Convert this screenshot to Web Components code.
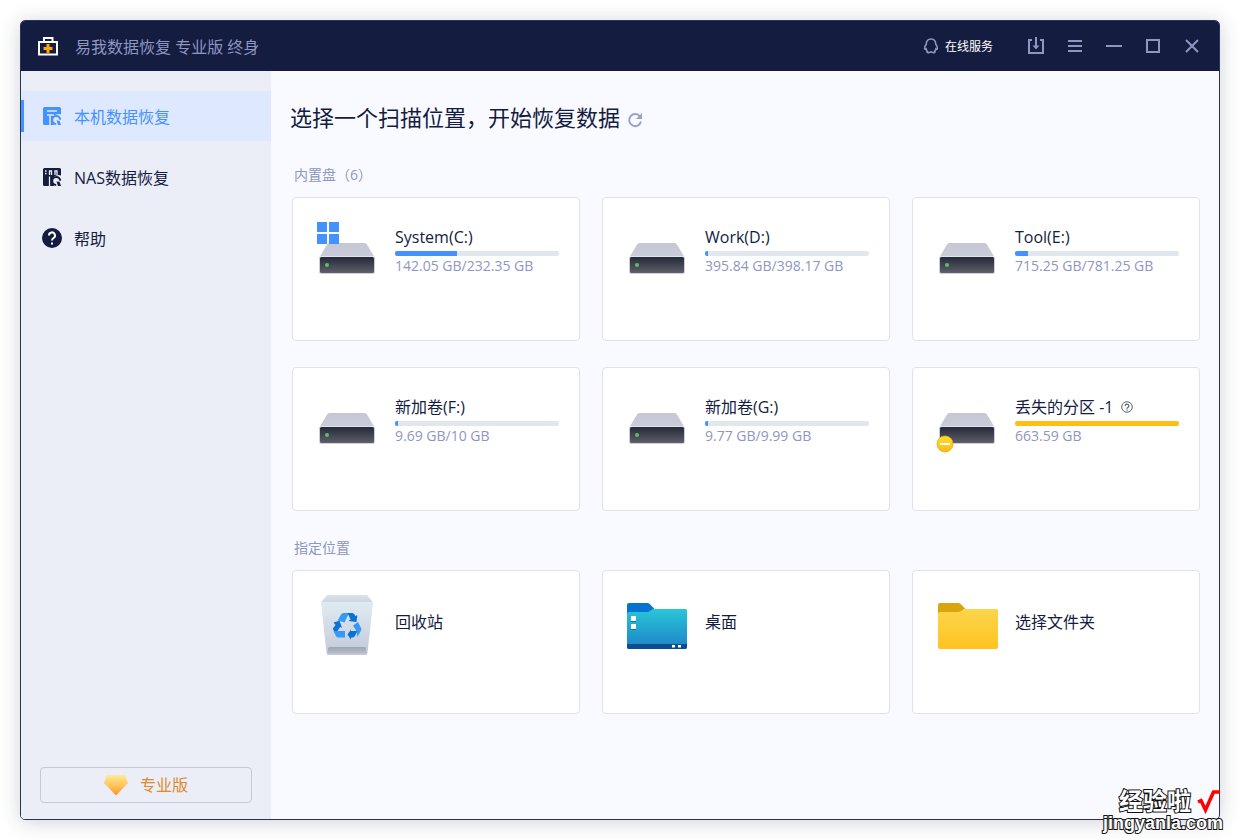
<!DOCTYPE html>
<html lang="zh-CN">
<head>
<meta charset="utf-8">
<meta name="viewport" content="width=device-width, initial-scale=1">
<title>易我数据恢复 专业版</title>
<style>
  body {
    margin: 0;
    background: #fff;
    color: #141c3f;
    font: 16px/24px "Open Sans", "Noto Sans CJK SC", sans-serif;
  }
</style>
</head>
<body>
<recovery-app></recovery-app>

<script>
const icons = {
  logo: `<svg width="20" height="20" viewBox="0 0 20 20" fill="none"><path d="M1 6h18v12.500H1z" stroke="#fff" stroke-width="2"/><path d="M6 6V2h8.500v4" stroke="#fff" stroke-width="2"/><path d="M10 8v9M5.500 12.500h9" stroke="#ffa800" stroke-width="3"/></svg>`,
  service: `<svg width="16" height="16" viewBox="0 0 16 16" fill="none" stroke="#8e96c2" stroke-width="1.600"><path d="M8 1C4.700 1 3.300 3.200 3.300 6 2.300 7.500 1.500 9 1.600 10.500c.1 1 .7 1.100 1.500.4.200 1 .6 1.600 1.200 2.300-.8.700-.2 1.400 1 1.400 1.300 0 2-.5 2.700-.9.700.4 1.400.9 2.700.9 1.200 0 1.800-.7 1-1.400.6-.7 1-1.300 1.200-2.300.8.700 1.400.6 1.500-.4.100-1.500-.7-3-1.700-4.500C12.700 3.200 11.300 1 8 1z"/></svg>`,
  download: `<svg width="20" height="20" viewBox="0 0 20 20" fill="none" stroke="#8e96c2" stroke-width="2"><path d="M6 4H3v13h14V4h-3M10 1v10"/><path d="M6.500 9.500h7L10 13.500z" fill="#8e96c2" stroke="none"/></svg>`,
  menu: `<svg width="20" height="20" viewBox="0 0 20 20" stroke="#8e96c2" stroke-width="2"><path d="M3 5h14M3 10h14M3 15h14"/></svg>`,
  minimize: `<svg width="20" height="20" viewBox="0 0 20 20" stroke="#8e96c2" stroke-width="2"><path d="M2 10h16"/></svg>`,
  maximize: `<svg width="20" height="20" viewBox="0 0 20 20" fill="none" stroke="#8e96c2" stroke-width="2"><path d="M4 4h12v12H4z"/></svg>`,
  close: `<svg width="20" height="20" viewBox="0 0 20 20" stroke="#8e96c2" stroke-width="2"><path d="M4 4l12 12M16 4L4 16"/></svg>`,
  local: `<svg width="20" height="20" viewBox="0 0 20 20" fill="none"><path d="M2.500 1h15a1.500 1.500 0 0 1 1.500 1.500V19H2.500A1.500 1.500 0 0 1 1 17.500v-15A1.500 1.500 0 0 1 2.500 1z" fill="currentColor"/><path d="M5 5h10M5 9h7M8 9v10" stroke="var(--tile)" stroke-width="1.500"/><path d="M19 8.500V20h-5a5.800 5.800 0 1 1 5-11.500z" fill="var(--tile)"/><path d="M18.200 13.800a4 4 0 1 0-4 4.200" stroke="currentColor" stroke-width="2"/><path d="M14.500 14.500l3 .2 1.500 4.300h-3z" fill="currentColor"/></svg>`,
  nas: `<svg width="20" height="20" viewBox="0 0 20 20" fill="none"><path d="M2.500 1h15a1.500 1.500 0 0 1 1.500 1.500V19H2.500A1.500 1.500 0 0 1 1 17.500v-15A1.500 1.500 0 0 1 2.500 1z" fill="currentColor"/><path d="M3 4h1.500M3 6.500h1.500M7.500 8V4h2v4M13 8V4h2v4M7.500 9.500V19" stroke="var(--tile)" stroke-width="1.300"/><path d="M19 8.500V20h-5a5.800 5.800 0 1 1 5-11.500z" fill="var(--tile)"/><path d="M18.200 13.800a4 4 0 1 0-4 4.200" stroke="currentColor" stroke-width="2"/><path d="M14.500 14.500l3 .2 1.500 4.300h-3z" fill="currentColor"/></svg>`,
  help: `<svg width="20" height="20" viewBox="0 0 20 20" fill="none"><circle cx="10" cy="10" r="10" fill="currentColor"/><path d="M7 7.500a3 3 0 1 1 4.500 2.500c-1 .6-1.500 1.100-1.500 2.500" stroke="#fff" stroke-width="2"/><path d="M9 14.500h2v2H9z" fill="#fff"/></svg>`,
  gem: `<svg width="24" height="20" viewBox="0 0 24 20"><defs><linearGradient id="g" x2="0" y2="1"><stop stop-color="#ffeb96"/><stop offset=".55" stop-color="#ffc257"/><stop offset="1" stop-color="#ff9428"/></linearGradient></defs><path d="M3.500 0h17a1 1 0 0 1 1 .7L24 8 12.700 19.700a1 1 0 0 1-1.400 0L0 8 2.500.7a1 1 0 0 1 1-.7z" fill="url(#g)"/></svg>`,
  refresh: `<svg width="16" height="16" viewBox="0 0 16 16" fill="none"><path d="M13 4.500A6 6 0 1 0 14 9.600" stroke="#9ba1cb" stroke-width="2"/><path d="M15 1v6H9z" fill="#9ba1cb"/></svg>`,
  hint: `<svg width="12" height="12" viewBox="0 0 12 12" fill="none" stroke="#5b617c"><circle cx="6" cy="6" r="5.300"/><path d="M4.200 5a1.800 1.800 0 1 1 2.700 1.500c-.6.400-.9.600-.9 1.300M6 8.500v1.200" stroke-width="1.200"/></svg>`
};

const driveBody = `<defs>
  <linearGradient id="top" x2="0" y2="1"><stop stop-color="#c5c7d5"/><stop offset="1" stop-color="#d0d2df"/></linearGradient>
  <linearGradient id="front" x2="0" y2="1"><stop stop-color="#242938"/><stop offset="1" stop-color="#605f6b"/></linearGradient>
  <linearGradient id="badge" x2="0" y2="1"><stop stop-color="#ffe02a"/><stop offset="1" stop-color="#fdb913"/></linearGradient></defs>
  <path d="M13.500 21h35a3 3 0 0 1 2.500 1.500L59 36v14a2 2 0 0 1-2 2H5a2 2 0 0 1-2-2V36l8-13.500A3 3 0 0 1 13.500 21z" fill="url(#top)"/>
  <path d="M4 34.500h54" stroke="#e3e5ee"/>
  <rect x="4" y="35" width="54" height="16" rx="1.500" fill="url(#front)"/>`;
const led = `<circle cx="11" cy="43" r="2" fill="#5cbf64"/>`;
const folder = (front, back, tail = "") => `<defs><linearGradient id="f" x2="0" y2="1"><stop stop-color="${front[0]}"/><stop offset="1" stop-color="${front[1]}"/></linearGradient></defs>
  <path d="M1 20V10a2 2 0 0 1 2-2h18.500a3 3 0 0 1 2 .8L29 14.500 22 20z" fill="${back}"/>
  <path d="M1 19a2 2 0 0 1 2-2h18.500a3 3 0 0 0 2-.8L25.500 15a3 3 0 0 1 2-1H59.500a1.500 1.500 0 0 1 1.500 1.500V52a2 2 0 0 1-2 2H3a2 2 0 0 1-2-2z" fill="url(#f)"/>${tail}`;
const art = {
  system: driveBody + led + `<path d="M1 0h10v10H1zM13 0h10v10H13zM1 12h10v10H1zM13 12h10v10H13z" fill="#4492ff"/>`,
  drive: driveBody + led,
  lost: driveBody + `<circle cx="9" cy="52" r="8" fill="url(#badge)" stroke="#e9a728" stroke-width=".8"/><path d="M4 52h10" stroke="#fff" stroke-width="2"/>`,
  bin: `<defs><linearGradient id="b" x2="0" y2="1"><stop stop-color="#dfebf2"/><stop offset="1" stop-color="#c3c9d8"/></linearGradient><linearGradient id="l" x2="0" y2="1"><stop stop-color="#dbe2ea"/><stop offset="1" stop-color="#cbd4e0"/></linearGradient><linearGradient id="s" x2="0" y2="1"><stop stop-color="#9ba4b5"/><stop offset="1" stop-color="#b9bec9"/></linearGradient></defs>
   <path d="M11 0h40l6 7.500H5z" fill="url(#l)"/><path d="M5 7.500h52L51.500 58a2 2 0 0 1-2 2h-37a2 2 0 0 1-2-2z" fill="url(#b)"/><path d="M14 52h34a2 2 0 0 1 2 2l.5 4.500H11.500L12 54a2 2 0 0 1 2-2z" fill="url(#s)"/>
   <path d="M21.700 25.500l3.300-6a3 3 0 0 1 2.600-1.500H33l-4.500 9.500zM37 30.500l5-3.500 3 6c.5 1 .5 1.500 0 2.500l-3.500 6.500-1-6zM17.500 36H29v6.500h-6.500a3 3 0 0 1-2.600-1.500z" fill="#359af5"/>
   <path d="M31.500 18H36a3 3 0 0 1 2.600 1.500l.7 1.500 2-.8L40.500 27l-8-1 2-1.500zM17.500 27.500l6-1.800 2.500 7-2-.8-2.500 4H18c-1.200-1.500-1.200-3 0-4l1.500-2zM31.500 39.500L35 34.500V36h6.500l-2.600 5a3 3 0 0 1-2.600 1.500H35v2.300z" fill="#0872d6"/>`,
  desktop: folder(["#28c6d7", "#1e82c7"], "#0573d2", `<path d="M1 49h60v3a2 2 0 0 1-2 2H3a2 2 0 0 1-2-2z" fill="#0b4d91"/><path d="M5 26h5v1H5zM5 34h5v1H5z" fill="#147198"/><path d="M5 21h5v5H5zM5 29h5v5H5zM46 50h3v2.500h-3zM52 50h3v2.500h-3z" fill="#fff"/>`),
  folder: `<g transform="translate(1)">${folder(["#fbd54c", "#ffc321"], "#d9a50f")}</g>`
};

function define(name, render) {
  customElements.define(name, class extends HTMLElement {
    connectedCallback() {
      if (this.shadowRoot) return;
      const t = document.createElement("template");
      t.innerHTML = render(this);
      this.attachShadow({ mode: "open" }).append(t.content.cloneNode(true));
    }
  });
}
const reset = `*, ::before { box-sizing: border-box } svg { display: block; flex: none }
  button { margin: 0; padding: 0; border: 0; background: none; font: inherit; color: inherit; cursor: pointer } a { color: inherit; text-decoration: none }`;

define("title-bar", () => `
<style>${reset}
  :host { display: block; background: #141c3f; }
  header { display: flex; align-items: center; height: 50px; padding: 0 17px; color: #8e96c2; }
  .name { margin-left: 17px; padding-top: 2px; flex: 1; }
  .service { display: flex; align-items: center; gap: 6px; margin-right: 33px; color: #fff; font-size: 12px; line-height: 20px; }
  .service span { padding-top: 2px; }
  nav { display: flex; gap: 19px; }
</style>
<header>
  ${icons.logo}<span class="name"><slot></slot></span>
  <a class="service" href="#service">${icons.service}<span>在线服务</span></a>
  <nav>
    <button aria-label="导入">${icons.download}</button>
    <button aria-label="菜单">${icons.menu}</button>
    <button aria-label="最小化">${icons.minimize}</button>
    <button aria-label="最大化">${icons.maximize}</button>
    <button aria-label="关闭">${icons.close}</button>
  </nav>
</header>`);

define("nav-item", el => `
<style>${reset}
  :host { display: block; --tile: #ebeef7; }
  :host([active]) { --tile: #dee9ff; background: var(--tile); color: #4492ff; }
  a { display: flex; align-items: center; gap: 12px; height: 50px; padding-right: 21px; }
  a::before { content: ""; width: 3px; height: 32px; margin-right: 6px; }
  :host([active]) a::before { background: #4492ff; }
  span { padding-top: 2px; }
</style>
<a href="#${el.getAttribute("icon")}">${icons[el.getAttribute("icon")]}<span><slot></slot></span></a>`);

define("side-bar", () => `
<style>${reset}
  :host { display: flex; flex-direction: column; width: 250px; flex: none; padding-top: 20px; background: #ebeef7; }
  nav { display: grid; gap: 11px; }
  button { display: flex; align-items: center; justify-content: center; gap: 12px; height: 36px; margin: auto 19px 16px; border: 1px solid #c9c9cd; border-radius: 4px; color: #dc8a2a; }
</style>
<nav><slot></slot></nav>
<button>${icons.gem}<span>专业版</span></button>`);

define("location-card", el => {
  const size = el.getAttribute("size");
  return `
<style>${reset}
  :host { display: block; min-width: 0; }
  .card { display: flex; align-items: flex-start; gap: 15px; width: 100%; height: 144px; padding: 24px 20px 24px 23px; border: 1px solid #dfe1ec; border-radius: 4px; background: #fff; text-align: left; }
  .info { display: flex; flex-direction: column; flex: 1; min-width: 0; padding-top: 3px; }
  .plain { padding-top: 15px; }
  .name { display: flex; align-items: center; gap: 8px; line-height: 24px; }
  progress { appearance: none; display: block; width: 100%; height: 5px; margin-top: 2px; border: 0; border-radius: 2px; overflow: hidden; background: #e3e7ef; }
  progress::-webkit-progress-bar { background: #e2e6ed; }
  progress::-webkit-progress-value { background: #4492ff; }
  :host([art="lost"]) progress::-webkit-progress-value { background: #ffbe12; }
  .size { font-size: 14px; line-height: 20px; color: #8e96c2; }
</style>
<button class="card">
  <svg width="64" height="64" viewBox="0 0 64 64" aria-hidden="true">${art[el.getAttribute("art")]}</svg>
  <span class="info ${size ? "" : "plain"}">
    <span class="name"><span><slot></slot></span>${el.getAttribute("art") === "lost" ? icons.hint : ""}</span>
    ${size ? `<progress max="100" value="${el.getAttribute("used")}" aria-label="容量"></progress><span class="size">${size}</span>` : ""}
  </span>
</button>`;
});

define("card-section", el => `
<style>${reset}
  :host { display: block; padding-left: 2px; }
  h2 { margin: 0 0 12px; padding-left: 2px; font-size: 14px; font-weight: 400; line-height: 20px; color: #8e96c2; }
  .grid { display: grid; grid-template-columns: repeat(3, minmax(0, 1fr)); gap: 26px 22px; }
</style>
<h2>${el.getAttribute("heading")}</h2>
<div class="grid"><slot></slot></div>`);

define("site-mark", () => `
<style>
  :host { position: absolute; right: 15px; bottom: 8px; width: 124px; color: #fff; font-family: "Liberation Sans", "Noto Sans CJK SC", sans-serif; font-weight: 700; pointer-events: none; }
  div { display: flex; align-items: center; justify-content: flex-end; gap: 5px; padding-right: 5px; }
  span { -webkit-text-stroke: 2px #111; paint-order: stroke fill; }
  .cn { font-size: 24px; line-height: 24px; }
  .url { display: block; font-size: 18px; line-height: 18px; text-align: center; white-space: nowrap; }
</style>
<div><span class="cn">经验啦</span><svg width="24" height="24" viewBox="0 0 24 24" fill="none" stroke="#f00" stroke-width="3.500"><path d="M2 12l3-1.500L9.500 20 17.500 2H24"/></svg></div>
<span class="url">jingyanla.com</span>`);

define("recovery-app", () => `
<style>${reset}
  :host { display: block; position: relative; min-height: 100vh; padding: 20px; box-sizing: border-box; }
  .window { display: flex; flex-direction: column; min-height: calc(100vh - 40px); border: 1px solid #2a335c; border-radius: 5px; overflow: hidden; background: #f9faff; box-shadow: 0 2px 20px rgba(30, 45, 70, .22); }
  .body { display: flex; flex: 1; }
  main { flex: 1; min-width: 0; padding: 30px 19px 20px; }
  .heading { display: flex; align-items: center; gap: 7px; margin-bottom: 32px; }
  h1 { margin: 0; font-size: 22px; font-weight: 400; line-height: 32px; }
  .heading button { padding-top: 6px; }
  card-section + card-section { margin-top: 27px; }
</style>
<div class="window">
  <title-bar>易我数据恢复 专业版 终身</title-bar>
  <div class="body">
    <side-bar>
      <nav-item icon="local" active>本机数据恢复</nav-item>
      <nav-item icon="nas">NAS数据恢复</nav-item>
      <nav-item icon="help">帮助</nav-item>
    </side-bar>
    <main>
      <div class="heading"><h1>选择一个扫描位置，开始恢复数据</h1><button aria-label="刷新">${icons.refresh}</button></div>
      <card-section heading="内置盘（6）">
        <location-card art="system" used="38" size="142.05 GB/232.35 GB">System(C:)</location-card>
        <location-card art="drive" used="2" size="395.84 GB/398.17 GB">Work(D:)</location-card>
        <location-card art="drive" used="8" size="715.25 GB/781.25 GB">Tool(E:)</location-card>
        <location-card art="drive" used="2" size="9.69 GB/10 GB">新加卷(F:)</location-card>
        <location-card art="drive" used="2" size="9.77 GB/9.99 GB">新加卷(G:)</location-card>
        <location-card art="lost" used="100" size="663.59 GB">丢失的分区 -1</location-card>
      </card-section>
      <card-section heading="指定位置">
        <location-card art="bin">回收站</location-card>
        <location-card art="desktop">桌面</location-card>
        <location-card art="folder">选择文件夹</location-card>
      </card-section>
    </main>
  </div>
</div>
<site-mark></site-mark>`);
</script>
</body>
</html>
